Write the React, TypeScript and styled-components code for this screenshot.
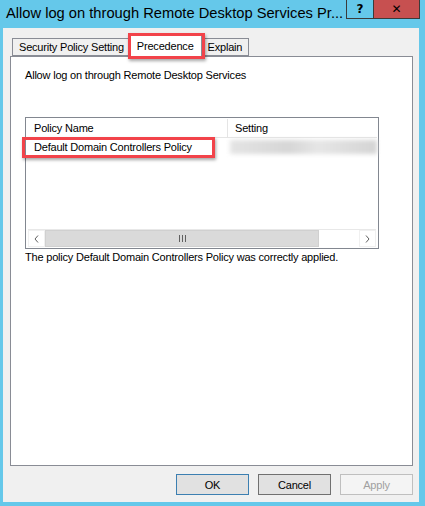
import React from "react";
import styled, { createGlobalStyle, css } from "styled-components";

const GlobalStyle = createGlobalStyle`
  html, body {
    margin: 0;
    padding: 0;
  }
  body {
    font-family: "Liberation Sans", Arial, sans-serif;
    font-size: 11px;
    letter-spacing: -0.2px;
    color: #000;
  }
`;

const redBox = css`
  content: "";
  position: absolute;
  border: 3px solid #f2434a;
  box-shadow: 1px 2px 3px rgba(0, 0, 0, 0.35);
  pointer-events: none;
`;

const Frame = styled.div`
  width: 425px;
  height: 506px;
  box-sizing: border-box;
  background: #65c8ea;
  padding: 0 6px 4px 3px;
  display: flex;
  flex-direction: column;
`;

const TitleBar = styled.div`
  height: 28px;
  display: flex;
  align-items: flex-start;
  margin-right: -1px;
`;

const Title = styled.div`
  flex: 1;
  min-width: 0;
  font-family: "Liberation Sans", Arial, sans-serif;
  font-size: 14.7px;
  letter-spacing: 0;
  padding: 5px 0 0 3px;
  white-space: nowrap;
  overflow: hidden;
`;

const CaptionButton = styled.div<{ $close?: boolean }>`
  flex: none;
  height: 19px;
  width: ${(p) => (p.$close ? "46px" : "28px")};
  box-sizing: border-box;
  border: 1px solid #3b3b3b;
  border-top: none;
  border-left: ${(p) => (p.$close ? "none" : "1px solid #3b3b3b")};
  background: ${(p) => (p.$close ? "#c75050" : "#65c8ea")};
  display: flex;
  align-items: center;
  justify-content: center;
  font-family: "DejaVu Sans", sans-serif;
  font-weight: bold;
  font-size: 12px;
`;

const Body = styled.div`
  flex: 1;
  background: #f0f0f0;
  padding: 0 6px 0 7px;
  display: flex;
  flex-direction: column;
`;

const TabStrip = styled.div`
  margin-top: 7px;
  height: 21px;
  padding-left: 2px;
  display: flex;
  align-items: flex-end;
  position: relative;
  z-index: 1;
`;

const Tab = styled.div<{ $active?: boolean }>`
  position: relative;
  box-sizing: border-box;
  height: ${(p) => (p.$active ? "22px" : "18px")};
  margin-bottom: ${(p) => (p.$active ? "-1px" : "0")};
  padding: ${(p) => (p.$active ? "4px 7px 0" : "2px 6px 0")};
  border: 1px solid #898c95;
  border-bottom: ${(p) => (p.$active ? "none" : "1px solid #898c95")};
  background: ${(p) => (p.$active ? "#fff" : "#f0f0f0")};
  white-space: nowrap;
  z-index: ${(p) => (p.$active ? 1 : 0)};
  &:not(:first-child) {
    margin-left: ${(p) => (p.$active ? "-2px" : "-1px")};
  }
  ${(p) =>
    p.$active &&
    css`
      &::after {
        ${redBox};
        left: -2px;
        right: -4px;
        top: -3px;
        bottom: -2px;
      }
    `}
`;

const Pane = styled.div`
  flex: 1;
  background: #fff;
  border: 1px solid #898c95;
  padding: 11px 14px;
`;

const PolicyTitle = styled.div`
  line-height: 14px;
`;

const ListView = styled.div`
  margin-top: 35px;
  width: 354px;
  height: 132px;
  box-sizing: border-box;
  border: 1px solid #828790;
  padding: 1px;
  display: flex;
  flex-direction: column;
`;

const HeaderRow = styled.div`
  height: 18px;
  display: grid;
  grid-template-columns: 201px 1fr;
  border-bottom: 1px solid #e5e5e5;
`;

const HeaderCell = styled.div`
  padding: 3px 0 0 7px;
  &:first-child {
    border-right: 1px solid #e5e5e5;
  }
`;

const Rows = styled.div`
  flex: 1;
`;

const Row = styled.div`
  height: 17px;
  display: grid;
  grid-template-columns: 201px 1fr;
  align-items: center;
`;

const NameCell = styled.div`
  position: relative;
  padding-left: 7px;
  &::after {
    ${redBox};
    left: -5px;
    right: 13px;
    top: -4px;
    bottom: -5px;
  }
`;

const BlurredCell = styled.div`
  margin-left: 2px;
  height: 14px;
  overflow: hidden;
  background: linear-gradient(90deg, #e4e4e4, #d6d6d6 40%, #e6e6e6 60%, #d4d4d4);
  filter: blur(2px);
`;

const ScrollBar = styled.div`
  height: 17px;
  display: flex;
  border-top: 1px solid #e8e8e8;
  margin: 0 1px;
`;

const ArrowButton = styled.div`
  width: 17px;
  display: flex;
  align-items: center;
  justify-content: center;
  background: #fff;
  border: 1px solid #f0f0f0;
  box-sizing: border-box;
`;

const Thumb = styled.div`
  width: 274px;
  background: #dadada;
  border: 1px solid #d0d0d0;
  box-sizing: border-box;
  display: flex;
  align-items: center;
  justify-content: center;
  gap: 2px;
`;

const Grip = styled.span`
  width: 1px;
  height: 7px;
  background: #606060;
`;

const Track = styled.div`
  flex: 1;
  background: #fff;
`;

const Status = styled.div`
  margin-top: 1px;
  line-height: 14px;
`;

const ButtonRow = styled.div`
  height: 36px;
  box-sizing: border-box;
  padding-top: 8px;
  display: flex;
  justify-content: flex-end;
  gap: 9px;
`;

const Button = styled.div<{ $variant?: "default" | "normal" | "disabled" }>`
  width: 73px;
  height: 21px;
  box-sizing: border-box;
  display: flex;
  align-items: center;
  justify-content: center;
  border: 1px solid
    ${(p) =>
      p.$variant === "default"
        ? "#3c7fb1"
        : p.$variant === "disabled"
        ? "#bfbfbf"
        : "#707070"};
  background: ${(p) => (p.$variant === "disabled" ? "#f4f4f4" : "#e1e1e1")};
  color: ${(p) => (p.$variant === "disabled" ? "#a0a0a0" : "#000")};
`;

const Chevron = ({ dir }: { dir: "left" | "right" }) => (
  <svg width="5" height="8" viewBox="0 0 5 8">
    <path
      d={dir === "left" ? "M4 0.5 L1 4 L4 7.5" : "M1 0.5 L4 4 L1 7.5"}
      fill="none"
      stroke="#606060"
      strokeWidth="1"
    />
  </svg>
);

const App = () => (
  <>
    <GlobalStyle />
    <Frame>
      <TitleBar>
        <Title>Allow log on through Remote Desktop Services Pr...</Title>
        <CaptionButton>?</CaptionButton>
        <CaptionButton $close>✕</CaptionButton>
      </TitleBar>
      <Body>
        <TabStrip>
          <Tab>Security Policy Setting</Tab>
          <Tab $active>Precedence</Tab>
          <Tab>Explain</Tab>
        </TabStrip>
        <Pane>
          <PolicyTitle>Allow log on through Remote Desktop Services</PolicyTitle>
          <ListView>
            <HeaderRow>
              <HeaderCell>Policy Name</HeaderCell>
              <HeaderCell>Setting</HeaderCell>
            </HeaderRow>
            <Rows>
              <Row>
                <NameCell>Default Domain Controllers Policy</NameCell>
                <BlurredCell />
              </Row>
            </Rows>
            <ScrollBar>
              <ArrowButton>
                <Chevron dir="left" />
              </ArrowButton>
              <Thumb>
                <Grip />
                <Grip />
                <Grip />
              </Thumb>
              <Track />
              <ArrowButton>
                <Chevron dir="right" />
              </ArrowButton>
            </ScrollBar>
          </ListView>
          <Status>The policy Default Domain Controllers Policy was correctly applied.</Status>
        </Pane>
        <ButtonRow>
          <Button $variant="default">OK</Button>
          <Button $variant="normal">Cancel</Button>
          <Button $variant="disabled">Apply</Button>
        </ButtonRow>
      </Body>
    </Frame>
  </>
);

export default App;
